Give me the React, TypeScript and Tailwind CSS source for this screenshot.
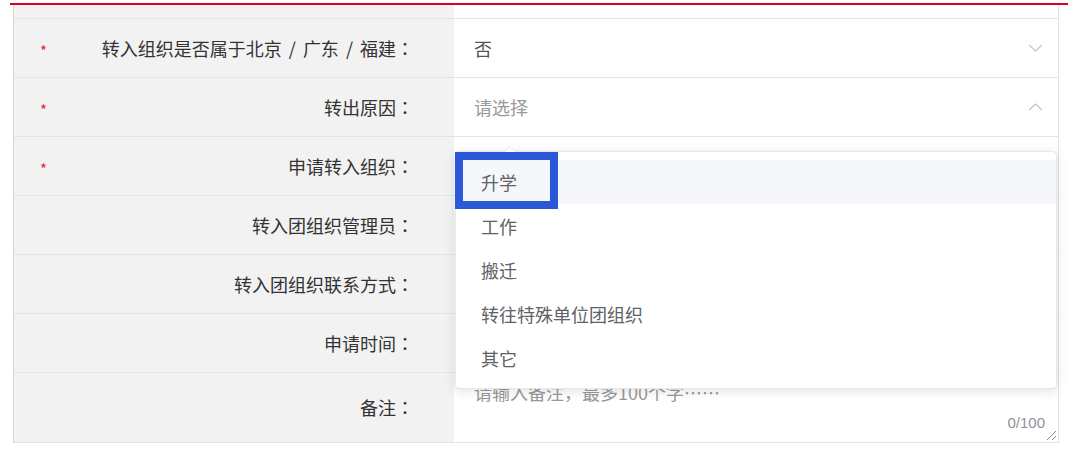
import React from "react";

const FONT = { fontFamily: '"Noto Sans CJK SC", "Noto Sans", sans-serif' };
const JP = { fontFamily: '"Noto Sans CJK JP", "Noto Sans CJK SC", sans-serif' };

type Row = { label: string; required?: boolean; value?: string; placeholder?: boolean; arrow?: "down" | "up" };

const rows: Row[] = [
  { label: "转入组织是否属于北京 / 广东 / 福建", required: true, value: "否", arrow: "down" },
  { label: "转出原因", required: true, value: "请选择", placeholder: true, arrow: "up" },
  { label: "申请转入组织", required: true },
  { label: "转入团组织管理员" },
  { label: "转入团组织联系方式" },
  { label: "申请时间" },
];

const options = ["升学", "工作", "搬迁", "转往特殊单位团组织", "其它"];

function Chevron({ dir }: { dir: "down" | "up" }) {
  return (
    <svg width="15" height="8" viewBox="0 0 15 8" fill="none">
      <polyline
        points={dir === "down" ? "1,1 7.5,7 14,1" : "1,7 7.5,1 14,7"}
        stroke="#c0c4cc"
        strokeWidth="1.2"
      />
    </svg>
  );
}

function Label({ text }: { text: string }) {
  const parts = text.split(" / ");
  return (
    <span className="text-[18px] text-[#333] whitespace-nowrap">
      {parts.map((p, i) => (
        <React.Fragment key={i}>
          {i > 0 && <span className="px-[3px]"> / </span>}
          {p}
        </React.Fragment>
      ))}
      <span style={JP}>：</span>
    </span>
  );
}

export default function App() {
  return (
    <div className="relative w-[1068px] h-[450px] bg-white overflow-hidden [text-spacing-trim:space-all]" style={FONT}>
      <div className="h-[3px]" />
      <div className="ml-[10px] h-[2px] bg-[#d9001b]" />

      <div className="ml-[13px] w-[1046px] border-l border-r border-l-[#dadada] border-r-[#e4e4e4]">
        {/* partial row above */}
        <div className="flex h-[14px] border-b border-[#e4e4e4]">
          <div className="w-[440px] bg-[#f2f2f2]" />
          <div className="flex-1 bg-white" />
        </div>

        {rows.map((r) => (
          <div key={r.label} className="flex h-[59px] border-b border-[#e4e4e4]">
            <div className="w-[440px] bg-[#f2f2f2] flex items-center pl-[26px] pr-[40px]">
              <span className="w-[8px] mt-[4px] text-[15px] leading-none text-[#f0262d]">{r.required ? "*" : ""}</span>
              <span className="flex-1 text-right">
                <Label text={r.label} />
              </span>
            </div>
            <div className="flex-1 bg-white flex items-center pl-[20px] pr-[15px]">
              <span className={`flex-1 text-[18px] ${r.placeholder ? "text-[#999]" : "text-[#555]"}`}>{r.value}</span>
              {r.arrow && <Chevron dir={r.arrow} />}
            </div>
          </div>
        ))}

        {/* remarks */}
        <div className="flex h-[70px] border-b border-[#e4e4e4]">
          <div className="w-[440px] bg-[#f2f2f2] flex items-center justify-end pr-[40px]">
            <Label text="备注" />
          </div>
          <div className="relative flex-1 bg-white pl-[20px] pt-[6px]">
            <div className="text-[18px] leading-[26px] text-[#999]">请输入备注，最多100个字……</div>
            <span
              className="absolute right-[13px] bottom-[12px] text-[15px] leading-none text-[#909399]"
              style={{ fontFamily: '"Liberation Sans", Arial, sans-serif' }}
            >
              0/100
            </span>
            <svg className="absolute right-[1px] bottom-[1px]" width="11" height="11" viewBox="0 0 11 11">
              <line x1="1" y1="10" x2="10" y2="1" stroke="#888" strokeWidth="1" />
              <line x1="6" y1="10" x2="10" y2="6" stroke="#888" strokeWidth="1" />
            </svg>
          </div>
        </div>
      </div>

      {/* dropdown */}
      <div className="absolute left-[455px] top-[151px] w-[602px] rounded-[4px] border border-[#e4e7ed] bg-white py-[8px] shadow-[0_2px_12px_rgba(0,0,0,0.12)]">
        <div className="absolute -top-[6px] left-[48px] w-0 h-0 border-l-[6px] border-r-[6px] border-b-[6px] border-l-transparent border-r-transparent border-b-[#e4e7ed]" />
        <div className="absolute -top-[5px] left-[49px] w-0 h-0 border-l-[5px] border-r-[5px] border-b-[5px] border-l-transparent border-r-transparent border-b-white" />
        {options.map((o, i) => (
          <div
            key={o}
            className={`h-[44px] flex items-center pl-[25px] text-[18px] text-[#606266] ${i === 0 ? "bg-[#f5f7fa]" : ""}`}
          >
            {o}
          </div>
        ))}
      </div>

      {/* annotation box */}
      <div className="absolute left-[455px] top-[152px] w-[103px] h-[57px] border-[8px] border-[#2b58d8]" />
    </div>
  );
}
